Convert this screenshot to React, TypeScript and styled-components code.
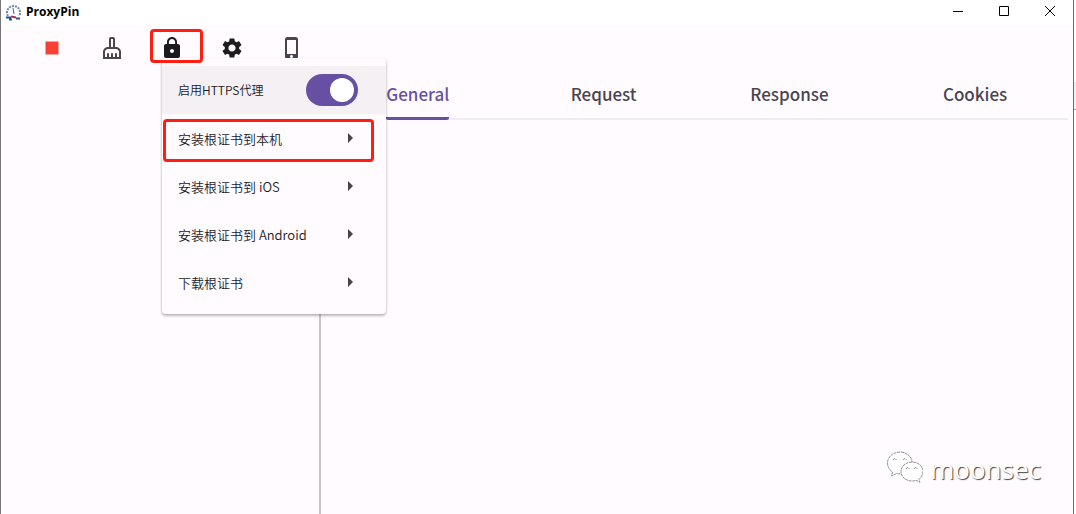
import React from "react";
import styled, { createGlobalStyle } from "styled-components";
import { MdOutlineCleaningServices, MdLock, MdSettings, MdPhoneIphone, MdStop, MdArrowRight } from "react-icons/md";

const GlobalStyle = createGlobalStyle`
  * { box-sizing: border-box; }
  html, body, #root { height: 100%; }
  body {
    margin: 0;
    background: linear-gradient(#fff 82px, #e9eff0 82px, #f3f7f7 109px, #a0a0a0 109px, #a0a0a0 110px, #fff 110px);
    overflow: hidden;
    font-family: "Open Sans", "Noto Sans CJK SC", sans-serif;
  }
  button { font: inherit; color: inherit; border: 0; background: none; padding: 0; margin: 0; }
`;

const Window = styled.div`
  position: relative;
  display: flex;
  flex-direction: column;
  height: 100vh;
  margin-right: 2px;
  border-left: 1px solid #77757a;
  border-right: 1px solid #6b696d;
  background: #fffbff;
`;

const TitleBar = styled.header`
  display: flex;
  align-items: center;
  height: 25px;
  flex: none;
  padding-left: 4px;
  background: #ffffff;
`;

const AppTitle = styled.h1`
  flex: 1;
  margin: 0 0 2px 4px;
  font-size: 12px;
  line-height: 20px;
  font-weight: 700;
  color: #000000;
`;

const WindowButton = styled.button`
  display: grid;
  place-items: center;
  width: 46px;
  height: 22px;
  margin-bottom: 3px;
`;

const Toolbar = styled.nav`
  display: flex;
  flex: none;
  height: 42px;
  padding-left: 21px;
`;

const ToolSlot = styled.div`
  position: relative;
  display: flex;
  flex: none;
  justify-content: center;
  width: 60px;
  padding-top: 3px;
`;

const ToolButton = styled.button<{ $color?: string }>`
  display: grid;
  place-items: center;
  width: 40px;
  height: 40px;
  color: ${(p) => p.$color ?? "#49454f"};
`;

const Menu = styled.ul`
  position: absolute;
  z-index: 2;
  top: 33px;
  left: 20px;
  width: 224px;
  margin: 0;
  padding: 8px 0;
  list-style: none;
  border-radius: 4px;
  background: #fffbff;
  box-shadow: 0 1px 3px rgba(0, 0, 0, 0.15), 0 2px 3px rgba(0, 0, 0, 0.2);
  font-family: "Noto Sans CJK SC", sans-serif;
  font-weight: 350;
  color: #1c1b1f;
`;

const MenuRow = styled.li<{ $active?: boolean }>`
  position: relative;
  height: 48px;
  background: ${(p) => (p.$active ? "#f4f0f4" : "transparent")};
`;

const MenuButton = styled.button`
  display: flex;
  align-items: center;
  justify-content: space-between;
  width: 100%;
  height: 100%;
  padding: 0 24px 0 16px;
  font-size: 13px;
  line-height: 20px;
  svg { color: #49454f; }
`;

const ItemLabel = styled.span`
  padding-top: 2px;
`;

const SwitchLabel = styled.label`
  display: flex;
  align-items: center;
  justify-content: space-between;
  height: 100%;
  padding: 0 28px 0 16px;
  font-size: 12px;
  line-height: 20px;
`;

const Switch = styled.input`
  appearance: none;
  display: flex;
  align-items: center;
  justify-content: flex-end;
  width: 52px;
  height: 32px;
  margin: 0;
  padding: 4px;
  border-radius: 16px;
  background: #6750a4;
  &::before {
    content: "";
    width: 24px;
    height: 24px;
    border-radius: 50%;
    background: #ffffff;
  }
`;

const Highlight = styled.span<{ $inset: string }>`
  position: absolute;
  z-index: 3;
  inset: ${(p) => p.$inset};
  border: 3px solid #ff1f12;
  border-radius: 4px;
  pointer-events: none;
`;

const Body = styled.main`
  display: flex;
  flex: 1;
  min-height: 0;
`;

const Sidebar = styled.section`
  width: 320px;
  flex: none;
  border-right: 2px solid #cac5cd;
`;

const Detail = styled.section`
  flex: 1;
  min-width: 0;
  padding: 4px 5px 0 4px;
`;

const Tabs = styled.div`
  display: flex;
  border-bottom: 2px solid #f1ecf4;
`;

const Tab = styled.button<{ $selected?: boolean }>`
  flex: 1;
  display: flex;
  justify-content: center;
  height: 49px;
  margin-bottom: -2px;
  font-family: "Noto Sans CJK SC", sans-serif;
  font-size: 17px;
  line-height: 46px;
  font-weight: 500;
  color: ${(p) => (p.$selected ? "#6750a4" : "#49454f")};
  span {
    height: 49px;
    border-bottom: ${(p) => (p.$selected ? "3px solid #6750a4" : "0")};
    border-radius: 2px;
  }
`;

const Watermark = styled.div`
  position: absolute;
  right: 32px;
  bottom: 27px;
  display: flex;
  align-items: center;
  gap: 7px;
  font-size: 26px;
  line-height: 32px;
  color: #ffffff;
  text-shadow: 1px 1px 1px #444444;
  svg { margin-bottom: 4px; }
`;

const menuItems = ["安装根证书到本机", "安装根证书到 iOS", "安装根证书到 Android", "下载根证书"];

export default function App() {
  return (
    <>
      <GlobalStyle />
      <Window>
        <TitleBar>
          <svg width="17" height="17" viewBox="0 0 17 17" fill="none" aria-hidden="true">
            <path d="M3 12A6.500 6.500 0 1 1 14 12" stroke="#7084b0" strokeWidth="2" strokeDasharray="2 1" />
            <path d="M8 4l1 6" stroke="#4a5f92" />
            <path d="M1 13.500h5M11 14.500h4M4 15.500h3" stroke="#27509a" strokeWidth="2" />
            <path d="M6 12.500l5 1" stroke="#b5303c" strokeWidth="2" />
          </svg>
          <AppTitle>ProxyPin</AppTitle>
          <WindowButton aria-label="Minimize">
            <svg width="10" height="10" stroke="#000"><path d="M0 5.5h10" /></svg>
          </WindowButton>
          <WindowButton aria-label="Maximize">
            <svg width="10" height="10" stroke="#000" fill="none"><path d="M.5.5h9v9h-9z" /></svg>
          </WindowButton>
          <WindowButton aria-label="Close">
            <svg width="10" height="10" stroke="#000"><path d="M0 0l10 10M10 0L0 10" /></svg>
          </WindowButton>
        </TitleBar>
        <Toolbar>
          <ToolSlot><ToolButton $color="#f44336" aria-label="Stop"><MdStop size={26} /></ToolButton></ToolSlot>
          <ToolSlot><ToolButton aria-label="Clear"><MdOutlineCleaningServices size={24} /></ToolButton></ToolSlot>
          <ToolSlot>
            <ToolButton $color="#1c1b1f" aria-label="HTTPS proxy"><MdLock size={24} /></ToolButton>
            <Menu>
              <MenuRow $active>
                <SwitchLabel>启用HTTPS代理<Switch type="checkbox" role="switch" defaultChecked /></SwitchLabel>
              </MenuRow>
              {menuItems.map((item, i) => (
                <MenuRow key={item}>
                  <MenuButton><ItemLabel>{item}</ItemLabel><MdArrowRight size={24} /></MenuButton>
                  {i === 0 && <Highlight $inset="5px 12px 0 1px" />}
                </MenuRow>
              ))}
            </Menu>
            <Highlight $inset="4px -1px 4px 8px" />
          </ToolSlot>
          <ToolSlot><ToolButton $color="#1c1b1f" aria-label="Settings"><MdSettings size={24} /></ToolButton></ToolSlot>
          <ToolSlot><ToolButton aria-label="Mobile"><MdPhoneIphone size={24} /></ToolButton></ToolSlot>
        </Toolbar>
        <Body>
          <Sidebar />
          <Detail>
            <Tabs role="tablist">
              {["General", "Request", "Response", "Cookies"].map((t, i) => (
                <Tab key={t} role="tab" aria-selected={i === 0} $selected={i === 0}><span>{t}</span></Tab>
              ))}
            </Tabs>
          </Detail>
        </Body>
        <Watermark>
          <svg width="36" height="32" viewBox="0 0 36 32" fill="#fff" stroke="#777" strokeWidth="0.8" strokeDasharray="3 0.6" aria-hidden="true">
            <path d="M13 1C6 1 .5 6 .5 12c0 4 2 7 5 9l-1 4 5-2.500c2 .5 4 .5 6 .3C25 22 26 17 25 10 24 5 19 1 13 1z" />
            <path d="M25 11c-6 0-11 4-11 9.500S19 30 25 30c1.500 0 3-.3 4-.7l4 2-1-3c2-2 4-4.500 4-7.800C36 15 31 11 25 11z" />
            <path d="M6 9q1.500-3 3.500 0M16 9q1.500-3 3.500 0M19 18q1.500-3 3.500 0M27 18q1.500-3 3.500 0" />
          </svg>
          moonsec
        </Watermark>
      </Window>
    </>
  );
}
